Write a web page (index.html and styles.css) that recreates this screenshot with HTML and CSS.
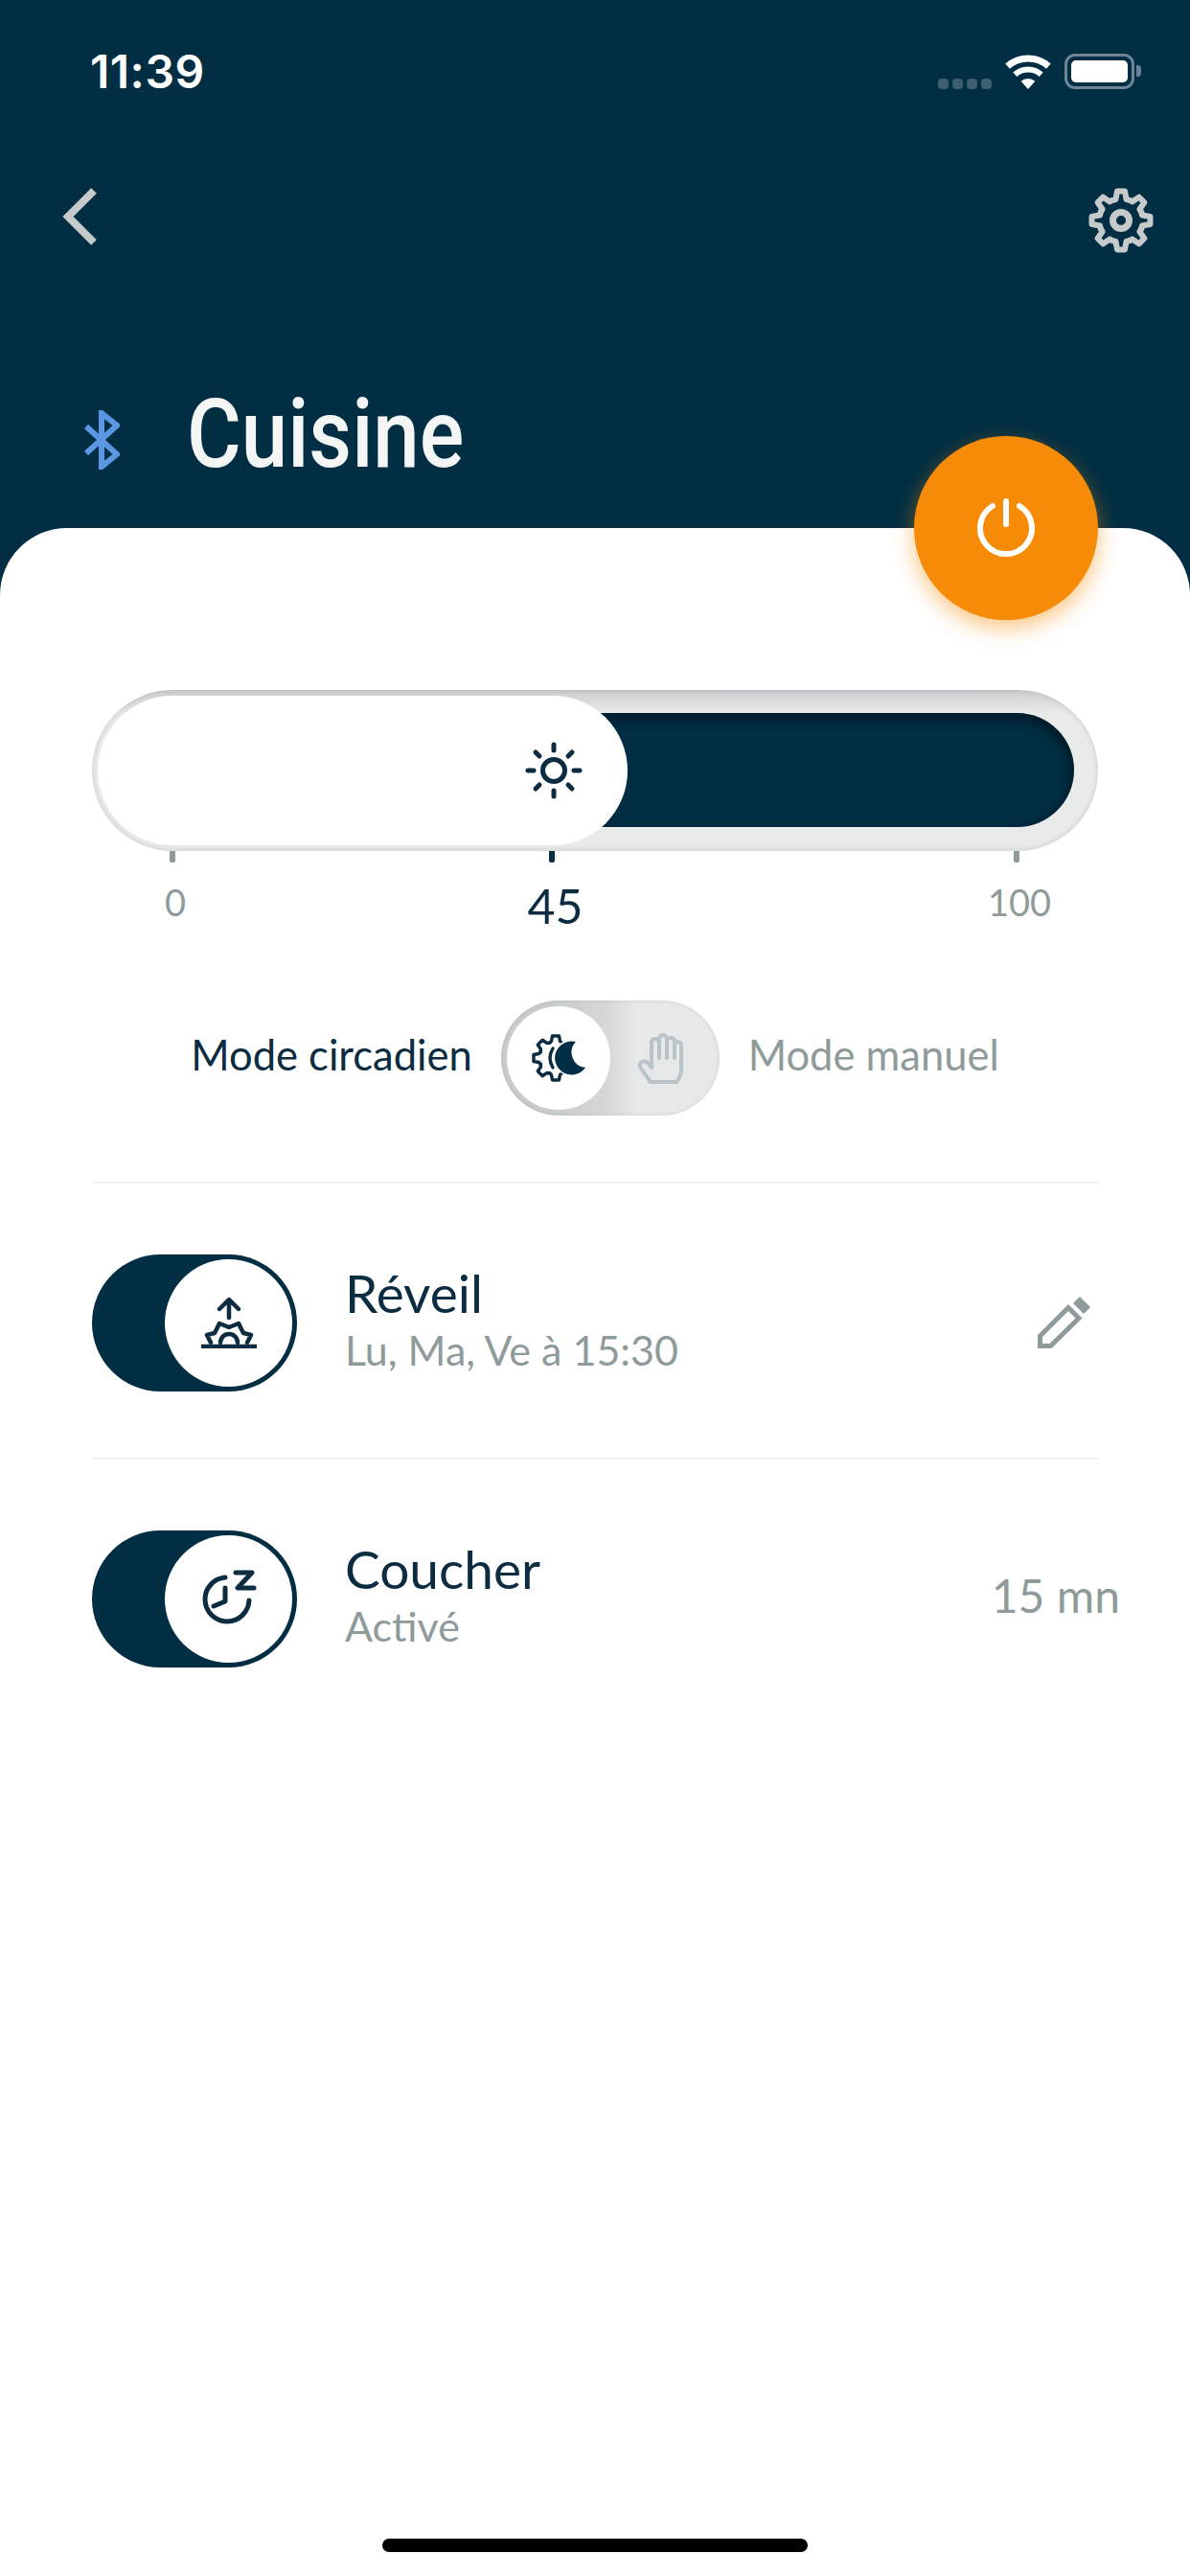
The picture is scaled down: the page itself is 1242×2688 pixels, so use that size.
FILE: index.html
```html
<!DOCTYPE html>
<html lang="fr">
<head>
<meta charset="utf-8">
<title>Cuisine</title>
<link rel="stylesheet" href="styles.css">
</head>
<body>
<div class="page">
  <header class="header">
    <div class="status">
      <span class="time">11:39</span>
      <div class="status-icons">
        <div class="signal"><i></i><i></i><i></i><i></i></div>
        <svg class="wifi" width="48" height="36" viewBox="0 0 48 36"><path d="M2.6 12.2A32 32 0 0 1 45.4 12.2" fill="none" stroke="#fff" stroke-width="7"/><path d="M10.3 20.7A20.5 20.5 0 0 1 37.7 20.7" fill="none" stroke="#fff" stroke-width="6"/><path d="M24 36L16.6 27.8A11 11 0 0 1 31.4 27.8Z" fill="#fff"/></svg>
        <div class="battery"><div class="battery-body"><div class="battery-level"></div></div><div class="battery-nub"></div></div>
      </div>
    </div>
    <nav class="nav">
      <svg width="36" height="60" viewBox="0 0 36 60"><path d="M33 3L6 30L33 57" fill="none" stroke="#c6cacb" stroke-width="8"/></svg>
      <svg width="68" height="68" viewBox="-34 -34 68 68">
        <defs><path id="tooth" d="M-8.8 -21.2L-5.5 -22L-4 -30.5H4L5.5 -22L8.8 -21.2" fill="none" stroke="#c6cacb" stroke-width="6" stroke-linejoin="round" stroke-linecap="round"/></defs>
        <use href="#tooth"/><use href="#tooth" transform="rotate(45)"/><use href="#tooth" transform="rotate(90)"/><use href="#tooth" transform="rotate(135)"/><use href="#tooth" transform="rotate(180)"/><use href="#tooth" transform="rotate(225)"/><use href="#tooth" transform="rotate(270)"/><use href="#tooth" transform="rotate(315)"/>
        <circle r="8.5" fill="none" stroke="#c6cacb" stroke-width="7"/>
      </svg>
    </nav>
    <div class="title-row">
      <svg width="38" height="62" viewBox="0 0 38 62"><path d="M3 17L35 46L19 59V3L35 16L3 45" fill="none" stroke="#5b97e2" stroke-width="6"/></svg>
      <h1 class="title">Cuisine</h1>
    </div>
    <button class="power" aria-label="Alimentation">
      <svg width="62" height="62" viewBox="0 0 62 62"><path d="M17 8A27 27 0 1 0 45 8" fill="none" stroke="#fff" stroke-width="6" stroke-linecap="round"/><path d="M31 3V27" fill="none" stroke="#fff" stroke-width="6" stroke-linecap="round"/></svg>
    </button>
  </header>

  <main class="sheet">
    <div class="slider">
      <div class="slider-fill"></div>
      <div class="slider-knob">
        <svg width="60" height="60" viewBox="0 0 60 60"><g fill="none" stroke="#0c2c41" stroke-linecap="round"><circle cx="30" cy="30" r="11.500" stroke-width="5"/><path stroke-width="5" d="M30 3V9M30 51V57M3 30H9M51 30H57M11 11L15 15M45 45L49 49M49 11L45 15M15 45L11 49"/></g></svg>
      </div>
    </div>

    <div class="scale">
      <div class="mark"><span class="tick"></span><span class="mark-label">0</span></div>
      <div class="mark mark-active"><span class="tick"></span><span class="mark-label">45</span></div>
      <div class="mark"><span class="tick"></span><span class="mark-label">100</span></div>
    </div>

    <div class="mode">
      <span class="mode-label">Mode circadien</span>
      <div class="mode-switch">
        <div class="mode-knob">
          <svg width="56" height="52" viewBox="0 0 56 52">
            <defs><path id="mini" d="M-7 -15.5L-4.5 -17.5L-3.5 -23H3.5L4.5 -17.5L7 -15.5" fill="none" stroke="#0c2c41" stroke-width="3.4" stroke-linejoin="round" stroke-linecap="round"/></defs>
            <g transform="translate(25 26)"><use href="#mini"/><use href="#mini" transform="rotate(-45)"/><use href="#mini" transform="rotate(-90)"/><use href="#mini" transform="rotate(-135)"/><use href="#mini" transform="rotate(180)"/></g>
            <path d="M22 16Q16 26 22 36" fill="none" stroke="#0c2c41" stroke-width="3.4" stroke-linecap="round"/>
            <path d="M46 9A17.5 17.5 0 1 0 56 36A16 16 0 0 1 46 9Z" fill="#022f45" stroke="#fff" stroke-width="3" paint-order="stroke"/>
          </svg>
        </div>
        <svg class="hand" width="47" height="53" viewBox="0 0 47 53"><path d="M13 51L3 37Q0 32 4 30Q8 28 11 32L14 36V11Q14 6 18 6Q22 6 22 11V8Q22 2 26 2Q30 2 30 8V10Q30 5 34 5Q38 5 38 10V14Q38 9 41 9Q45 9 45 14V38Q45 45 40 51ZM22 10V26M30 10V26M38 12V26" fill="none" stroke="#b8c4c9" stroke-width="4" stroke-linejoin="round" stroke-linecap="round"/></svg>
      </div>
      <span class="mode-label mode-label-off">Mode manuel</span>
    </div>

    <section class="row">
      <div class="switch">
        <div class="switch-knob">
          <svg width="60" height="53" viewBox="0 0 60 53"><g fill="none" stroke="#0c2c41" stroke-width="4.500" stroke-linecap="round" stroke-linejoin="round"><path d="M30 21V3M20 12L30 2L40 12"/><path d="M11 47L7 39L15 37L20 27L30 31L40 27L45 37L53 39L49 47"/><path d="M21 47A9 9 0 0 1 39 47"/><path d="M1 51H59" stroke-linecap="butt"/></g></svg>
        </div>
      </div>
      <div class="row-text">
        <div class="row-title">Réveil</div>
        <div class="row-sub">Lu, Ma, Ve à 15:30</div>
      </div>
      <svg class="pencil" width="55" height="54" viewBox="0 0 55 54"><path d="M2.5 51.500V41L32 11.500L43 22.500L13.500 51.500Z" fill="none" stroke="#8f9b9a" stroke-width="5"/><path d="M37 7L44 0L55 11L48 18Z" fill="#8f9b9a"/></svg>
    </section>

    <section class="row">
      <div class="switch">
        <div class="switch-knob">
          <svg width="62" height="62" viewBox="0 0 62 62"><g fill="none" stroke="#0c2c41" stroke-linecap="round" stroke-linejoin="round"><path stroke-width="5" d="M27 8A23 23 0 1 0 52 32"/><path stroke-width="5" d="M27 19V33L15 38"/><path stroke-width="5" d="M38 3H55L40 19H57"/></g></svg>
        </div>
      </div>
      <div class="row-text">
        <div class="row-title">Coucher</div>
        <div class="row-sub">Activé</div>
      </div>
      <span class="row-value">15 mn</span>
    </section>

    <div class="home-bar"></div>
  </main>
</div>
</body>
</html>
```
FILE: styles.css
```css
* { box-sizing: border-box; }
html, body { margin: 0; padding: 0; }
body { font-family: "Lato", "Liberation Sans", sans-serif; background: #fff; }

.page {
  width: 1242px;
  height: 2688px;
  display: flex;
  flex-direction: column;
  background: #012e43;
  overflow: hidden;
}

.header {
  position: relative;
  height: 551px;
  flex: none;
  display: flex;
  flex-direction: column;
  z-index: 2;
}

.status {
  margin-top: 50px;
  height: 48px;
  padding: 0 51px 0 94px;
  display: flex;
  align-items: center;
  justify-content: space-between;
}
.time {
  font-family: "Inter", "Liberation Sans", sans-serif;
  font-weight: 600;
  font-size: 48px;
  letter-spacing: 0.5px;
  color: #fff;
}
.status-icons { display: flex; align-items: flex-end; }
.signal { display: flex; gap: 4px; margin-bottom: 0; }
.signal i { width: 11px; height: 11px; border-radius: 4px; background: #3d5f72; }
.wifi { margin-left: 14px; }
.battery { display: flex; align-items: center; margin-left: 14px; }
.battery-body {
  width: 73px;
  height: 37px;
  padding: 4px;
  border: 3px solid #6d8595;
  border-radius: 11px;
}
.battery-level { height: 100%; background: #fff; border-radius: 5px; }
.battery-nub { width: 5px; height: 12px; margin-left: 2px; background: #6d8595; border-radius: 0 4px 4px 0; }

.nav {
  margin-top: 95px;
  padding: 3px 38px 0 65px;
  display: flex;
  justify-content: space-between;
  align-items: flex-start;
}

.title-row {
  margin-top: 139px;
  padding-left: 87px;
  display: flex;
  align-items: center;
  gap: 70px;
}
.title {
  margin: 0;
  font-family: "Roboto", "Liberation Sans", sans-serif;
  font-weight: 500;
  font-size: 100px;
  line-height: 100px;
  color: #f4f5f5;
  transform: scaleX(0.87);
  transform-origin: left center;
}
.title-row svg { margin-top: 11px; }

.power {
  position: absolute;
  right: 96px;
  bottom: -96px;
  width: 192px;
  height: 192px;
  padding: 0;
  border: 0;
  border-radius: 50%;
  background: #f58b06;
  box-shadow: 0 8px 22px rgba(245, 139, 6, 0.5);
  display: flex;
  align-items: center;
  justify-content: center;
}

.sheet {
  flex: 1;
  display: flex;
  flex-direction: column;
  padding: 169px 96px 0;
  background: #fff;
  border-radius: 70px 70px 0 0;
}

.slider {
  position: relative;
  height: 168px;
  flex: none;
  padding: 24px 25px 25px 400px;
  border-radius: 84px;
  background: linear-gradient(180deg, #cdd0d0 0, #e9ebeb 15%);
  box-shadow: inset 0 0 6px rgba(0, 0, 0, 0.14);
}
.slider-fill {
  height: 119px;
  border-radius: 0 60px 60px 0;
  background: #012e43;
  box-shadow: inset 0 10px 12px rgba(0, 0, 0, 0.28), inset -6px 0 8px rgba(0, 0, 0, 0.2);
}
.slider-knob {
  position: absolute;
  left: 6px;
  top: 6px;
  width: 553px;
  height: 156px;
  padding-right: 47px;
  border-radius: 78px;
  background: #fff;
  display: flex;
  align-items: center;
  justify-content: flex-end;
}

.scale {
  margin: 0 85px 0 84px;
  display: grid;
  grid-template-columns: 45% 55% 0;
  height: 156px;
}
.mark { width: 0; display: flex; flex-direction: column; align-items: center; }
.tick { flex: none; width: 6px; height: 12px; border-radius: 0 0 2px 2px; background: #8f9b9a; }
.mark-label {
  margin-top: 18px;
  margin-left: 6px;
  font-size: 38px;
  line-height: 46px;
  color: #8f9b9a;
}
.mark-active .tick { background: #0c2c41; }
.mark-active .mark-label {
  margin-top: 17px;
  font-size: 50px;
  line-height: 56px;
  color: #0c2c41;
}

.mode {
  height: 120px;
  flex: none;
  display: flex;
  align-items: center;
  justify-content: center;
  gap: 30px;
}
.mode-label { margin-bottom: 8px; font-size: 43.5px; color: #0c2c41; white-space: nowrap; }
.mode-label-off { color: #8f9b9a; }
.mode-switch {
  width: 228px;
  height: 120px;
  flex: none;
  padding: 6px;
  border-radius: 60px;
  background: linear-gradient(90deg, #c9cccc 0, #c9cccc 50px, #d6d8d8 110px, #e7e9e9 140px);
  box-shadow: inset 0 0 4px rgba(0, 0, 0, 0.1);
  display: flex;
  align-items: center;
}
.mode-knob {
  width: 108px;
  height: 108px;
  flex: none;
  border-radius: 50%;
  background: #fff;
  display: flex;
  align-items: center;
  justify-content: center;
}
.hand { margin-left: 29px; }

.row {
  height: 288px;
  flex: none;
  padding-top: 74px;
  border-top: 2px solid #f1f2f2;
  display: flex;
  align-items: flex-start;
}
.mode + .row { margin-top: 69px; }
.switch {
  width: 214px;
  height: 143px;
  flex: none;
  padding: 5px;
  border-radius: 72px;
  background: #012e43;
  display: flex;
  justify-content: flex-end;
}
.switch-knob {
  width: 133px;
  height: 133px;
  border-radius: 50%;
  background: #fff;
  display: flex;
  align-items: center;
  justify-content: center;
}
.row-text { flex: 1; margin-left: 50px; padding-top: 9px; }
.row-title { font-size: 55px; line-height: 62px; color: #0c2c41; }
.row-sub { margin-top: 4px; font-size: 43px; line-height: 50px; color: #8f9b9a; }
.pencil { margin: 44px 8px 0 0; }
.row-value { margin: 40px -23px 0 0; font-size: 48px; line-height: 56px; color: #8f9b9a; white-space: nowrap; }

.home-bar {
  margin-top: auto;
  margin-bottom: 25px;
  align-self: center;
  width: 444px;
  height: 14px;
  border-radius: 7px;
  background: #000;
}
```
